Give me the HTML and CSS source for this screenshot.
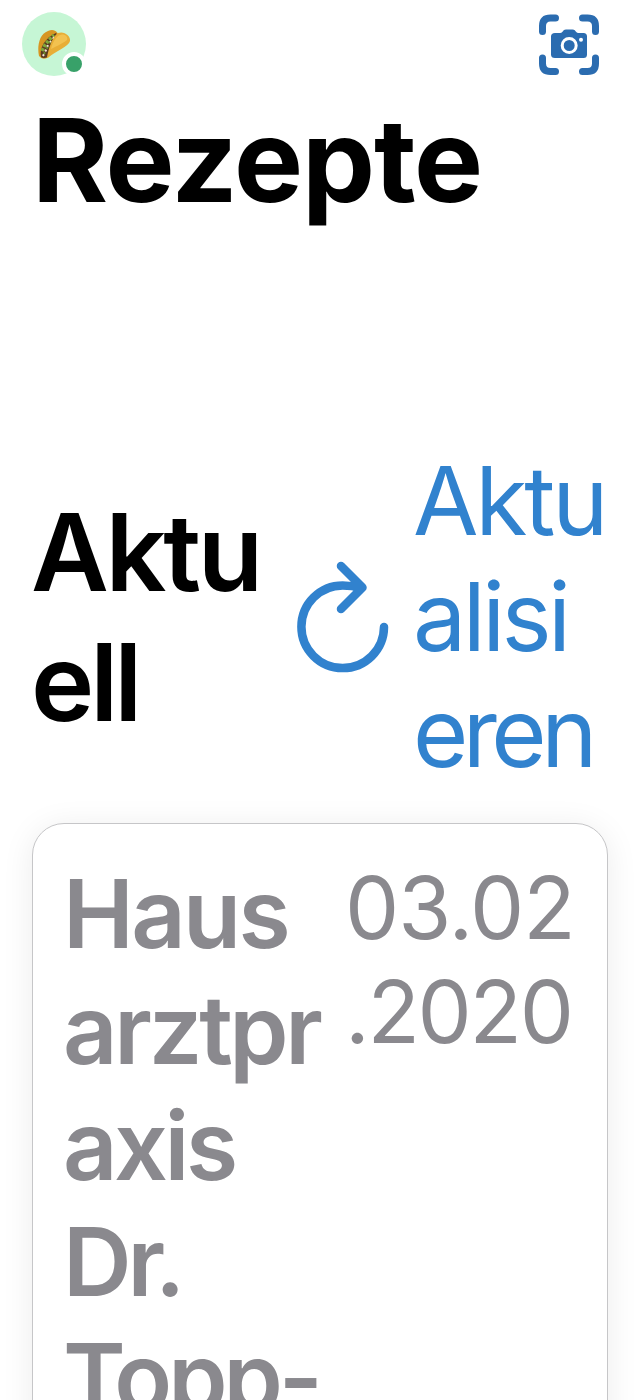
FILE: index.html
```html
<!DOCTYPE html>
<html lang="de">
<head>
<meta charset="utf-8">
<title>Rezepte</title>
<link rel="stylesheet" href="styles.css">
</head>
<body>
<main class="screen">
  <header class="topbar">
    <div class="avatar">
      <svg class="taco" viewBox="0 0 34 30" width="34" height="30">
        <path d="M2 27C0 18 2 5 11 2C18-1 22 4 22 9L10 29Q5 31 2 27Z" fill="#d79622"/>
        <path d="M4 28C2 19 8 9 19 4L21 7L11 28Q6 30 4 28Z" fill="#5b3a20"/>
        <path d="M5 22L8 16L12 11L17 6" fill="none" stroke="#7fa83a" stroke-width="3.500" stroke-dasharray="3 1.500"/>
        <path d="M6 27L9 21L11 16L15 11L18 7" fill="none" stroke="#f0e4da" stroke-width="2" stroke-dasharray="2 3"/>
        <path d="M7 25L10 19L13 13" fill="none" stroke="#6b9430" stroke-width="2" stroke-dasharray="2 4"/>
        <path d="M10 28C12 19 15 8 21 4C27 1.500 34 7 33 12C32 17 18 23 12 28Q10 30 10 28Z" fill="#e8ae36"/>
        <path d="M14 20C16 12 20 6 25 5.500C29 5.500 31 8 30 11C25 15 18 18 14 20Z" fill="#f2c250"/>
      </svg>
      <span class="status"></span>
    </div>
    <svg class="scan" viewBox="0 0 62 62" width="62" height="62">
      <path d="M4.500 17.500V12Q4.500 4 12.500 4H17.500M44.500 4H49.500Q57.500 4 57.500 12V17.500M57.500 44V49.500Q57.500 57.500 49.500 57.500H44.500M17.500 57.500H12.500Q4.500 57.500 4.500 49.500V44" fill="none" stroke="#2b6cb0" stroke-width="7" stroke-linecap="round"/>
      <path d="M17 19H22Q23.500 19 24.500 17.700L25.700 16.300Q26.500 15.500 28 15.500H34.500Q36 15.500 36.800 16.300L38 17.700Q39 19 40.500 19H45.500Q49 19 49 22.500V40.500Q49 44 45.500 44H17Q13 44 13 40.500V22.500Q13 19 17 19Z" fill="#2b6cb0"/>
      <circle cx="31.200" cy="31.500" r="7" fill="#2b6cb0" stroke="#fff" stroke-width="3"/>
      <circle cx="43" cy="25.800" r="2" fill="#fff"/>
    </svg>
  </header>
  <h1 class="title">Rezepte</h1>
  <section class="section-head">
    <h2 class="heading"><span class="h-a">Aktu</span><br><span class="h-b">ell</span></h2>
    <button class="refresh">
      <svg class="refresh-icon" viewBox="296 560 94 114" width="94" height="114">
        <path d="M384 627A41.300 41.300 0 1 1 342.700 585.500Q352 585.500 361 588M341 566L362.500 587.500L341 609" fill="none" stroke="#3182ce" stroke-width="8.500" stroke-linecap="round" stroke-linejoin="round"/>
      </svg>
      <span class="refresh-label"><span class="r-a">Aktu</span><br><span class="r-b">alisi</span><br><span class="r-c">eren</span></span>
    </button>
  </section>
  <article class="card">
    <div class="practice"><span class="p-a">Haus</span><br><span class="p-b">arztpr</span><br><span class="p-c">axis</span><br><span class="p-d">Dr.</span><br><span class="p-e">Topp-</span></div>
    <time class="date"><span class="d-a">03.02</span><br><span class="d-b">.2020</span></time>
  </article>
</main>
</body>
</html>
```
FILE: styles.css
```css
* { box-sizing: border-box; }
body { margin: 0; background: #fff; font-family: Inter, "Liberation Sans", sans-serif; }
.screen { width: 640px; height: 1400px; overflow: hidden; background: #fff; }
.topbar { height: 88px; padding: 12px 40px 0 22px; display: flex; justify-content: space-between; align-items: flex-start; }
.avatar { position: relative; width: 64px; height: 64px; border-radius: 50%; background: #c6f6d5; display: flex; align-items: center; justify-content: center; }
.taco { display: block; }
.status { position: absolute; left: 40px; top: 40px; width: 24px; height: 24px; border: 4px solid #fff; border-radius: 50%; background: #38a169; }
.scan { display: block; margin-top: 2px; }
.title { margin: 0; padding-left: 32px; height: 144px; font-size: 116px; line-height: 144px; font-weight: 700; letter-spacing: -1.2px; color: #000; }
.section-head { margin-top: 211px; padding-left: 31px; height: 348px; display: flex; align-items: center; }
.heading { margin: 0; width: 265px; font-size: 107px; line-height: 130px; font-weight: 600; color: #000; white-space: nowrap; }
.refresh { border: 0; padding: 0; margin: 0; background: none; display: flex; align-items: center; font: inherit; color: #3182ce; text-align: left; }
.refresh-icon { display: block; flex: none; margin-right: 23px; }
.refresh-label { font-size: 95px; line-height: 116px; font-weight: 400; white-space: nowrap; }
.card { margin: 32px 32px 0; height: 700px; padding: 32px 31px 0 30px; border: 1px solid #c6c6c8; border-radius: 32px; background: #fff; box-shadow: 0 4px 32px rgba(0, 0, 0, .08); display: flex; color: #8a898e; white-space: nowrap; }
.practice { width: 282px; flex: none; font-size: 95px; line-height: 116px; font-weight: 600; }
.date { font-size: 86px; line-height: 104px; font-weight: 400; }
.h-a { letter-spacing: -3.3px; }
.h-b { letter-spacing: -4px; }
.r-a { letter-spacing: -3.2px; }
.r-b { letter-spacing: -3.6px; }
.r-c { letter-spacing: -5.6px; }
.p-a { letter-spacing: -2.7px; }
.p-b { letter-spacing: -3.3px; }
.p-c { letter-spacing: -3.5px; }
.p-d { letter-spacing: -4.2px; }
.p-e { letter-spacing: -4px; }
.d-a { letter-spacing: -1px; }
.d-b { letter-spacing: -2.3px; }
```
